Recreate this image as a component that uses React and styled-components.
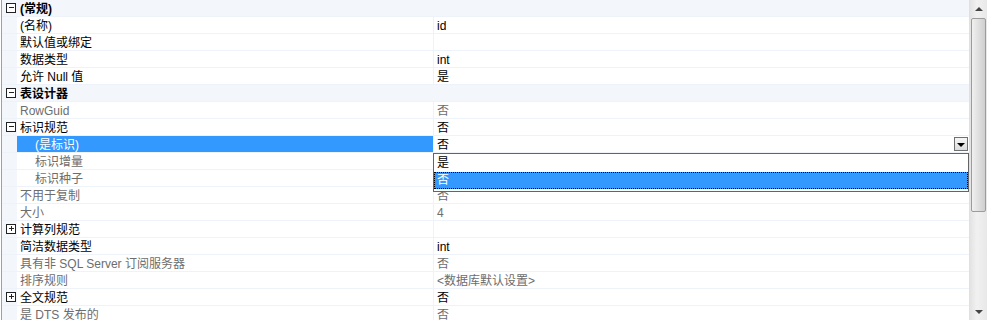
import React from 'react'
import styled, { createGlobalStyle } from 'styled-components'

const GlobalStyle = createGlobalStyle`
  html, body {
    margin: 0;
    padding: 0;
    background: #fff;
  }
  body {
    font-family: "Liberation Sans", "Noto Sans CJK SC", sans-serif;
    font-size: 12px;
  }
`

const Frame = styled.div`
  display: flex;
  width: 989px;
  height: 320px;
  overflow: hidden;
  background: #fff;
`

const Grid = styled.div`
  position: relative;
  flex: 1;
  margin-left: 1px;
  border-left: 1px solid #a0a0a0;
  overflow: hidden;
`

const Row = styled.div`
  display: grid;
  grid-template-columns: 15px 417px 1fr;
  height: 17px;
  box-sizing: border-box;
  border-bottom: 1px solid #eef2f9;
  background: ${p => (p.category ? '#f3f6fb' : '#fff')};
`

const Gutter = styled.div`
  background: #f3f6fb;
  display: flex;
  align-items: center;
  justify-content: center;
`

const Toggle = styled.span`
  position: relative;
  width: 8px;
  height: 8px;
  border: 1px solid #222;
  background: #fff;
  margin-left: 2px;
  &::before {
    content: '';
    position: absolute;
    left: 2px;
    top: 3px;
    width: 5px;
    height: 1px;
    background: #222;
  }
  &::after {
    content: '';
    display: ${p => (p.plus ? 'block' : 'none')};
    position: absolute;
    left: 4px;
    top: 1px;
    width: 1px;
    height: 5px;
    background: #222;
  }
`

const Label = styled.div`
  padding: 2px 0 0 ${p => (p.indent ? 18 : 3)}px;
  line-height: 14px;
  white-space: nowrap;
  color: ${p => (p.selected ? '#fff' : p.dim ? '#6d6d6d' : '#000')};
  font-weight: ${p => (p.category ? 'bold' : 'normal')};
  background: ${p => (p.selected ? '#3399ff' : 'transparent')};
  border-right: 1px solid ${p => (p.category ? 'transparent' : '#eef2f9')};
`

const Value = styled.div`
  display: flex;
  align-items: center;
  justify-content: space-between;
  padding: 2px 0 0 3px;
  line-height: 14px;
  white-space: nowrap;
  color: ${p => (p.dim ? '#6d6d6d' : '#000')};
`

const DropButton = styled.span`
  width: 14px;
  height: 14px;
  margin: -2px 1px 0 0;
  box-sizing: border-box;
  border: 1px solid #707070;
  background: linear-gradient(#f6f6f6, #dcdcdc);
  display: flex;
  align-items: center;
  justify-content: center;
  &::after {
    content: '';
    border-left: 4px solid transparent;
    border-right: 4px solid transparent;
    border-top: 4px solid #000;
    margin-top: 1px;
  }
`

const DropList = styled.div`
  position: absolute;
  left: 431px;
  top: 153px;
  width: 536px;
  box-sizing: border-box;
  border: 1px solid #646464;
  background: #fff;
  padding: 1px 0 2px;
`

const Option = styled.div`
  height: 17px;
  line-height: 15px;
  padding-left: 2px;
  box-sizing: border-box;
  color: ${p => (p.selected ? '#fff' : '#000')};
  background: ${p => (p.selected ? '#3399ff' : '#fff')};
  border: 1px dotted ${p => (p.selected ? '#000' : 'transparent')};
`

const Scrollbar = styled.div`
  width: 17px;
  margin-right: 2px;
  display: flex;
  flex-direction: column;
  background: linear-gradient(90deg, #e3e3e3, #f1f1f1 40%, #e8e8e8);
  border-left: 1px solid #e0e0e0;
`

const Arrow = styled.div`
  height: 17px;
  display: flex;
  align-items: center;
  justify-content: center;
  &::after {
    content: '';
    border-left: 4px solid transparent;
    border-right: 4px solid transparent;
    ${p => (p.down ? 'border-top: 4px solid #444;' : 'border-bottom: 4px solid #444;')}
  }
`

const Thumb = styled.div`
  height: 194px;
  margin: 1px 1px 0;
  box-sizing: border-box;
  border: 1px solid #9c9c9c;
  border-radius: 2px;
  background: linear-gradient(90deg, #f0f0f0, #dcdcdc 60%, #cfcfcf);
`

const Track = styled.div`
  flex: 1;
`

// values of the two rows under the open list are covered, so left empty
const rows = [
  { label: '(常规)', category: true, toggle: 'minus' },
  { label: '(名称)', value: 'id' },
  { label: '默认值或绑定', value: '' },
  { label: '数据类型', value: 'int' },
  { label: '允许 Null 值', value: '是' },
  { label: '表设计器', category: true, toggle: 'minus' },
  { label: 'RowGuid', value: '否', dim: true },
  { label: '标识规范', value: '否', toggle: 'minus' },
  { label: '(是标识)', value: '否', indent: true, selected: true },
  { label: '标识增量', value: '', indent: true, dim: true },
  { label: '标识种子', value: '', indent: true, dim: true },
  { label: '不用于复制', value: '否', dim: true },
  { label: '大小', value: '4', dim: true },
  { label: '计算列规范', value: '', toggle: 'plus' },
  { label: '简洁数据类型', value: 'int' },
  { label: '具有非 SQL Server 订阅服务器', value: '否', dim: true },
  { label: '排序规则', value: '<数据库默认设置>', dim: true },
  { label: '全文规范', value: '否', toggle: 'plus' },
  { label: '是 DTS 发布的', value: '否', dim: true }
]

const App = () => (
  <Frame>
    <GlobalStyle />
    <Grid>
      {rows.map((r, i) => (
        <Row key={i} category={r.category}>
          <Gutter>
            {r.toggle ? <Toggle plus={r.toggle === 'plus'} /> : null}
          </Gutter>
          <Label
            category={r.category}
            indent={r.indent}
            dim={r.dim}
            selected={r.selected}
          >
            {r.label}
          </Label>
          <Value dim={r.dim}>
            {r.category ? null : r.value}
            {r.selected ? <DropButton /> : null}
          </Value>
        </Row>
      ))}
      <DropList>
        <Option>是</Option>
        <Option selected>否</Option>
      </DropList>
    </Grid>
    <Scrollbar>
      <Arrow />
      <Thumb />
      <Track />
      <Arrow down />
    </Scrollbar>
  </Frame>
)

export default App
